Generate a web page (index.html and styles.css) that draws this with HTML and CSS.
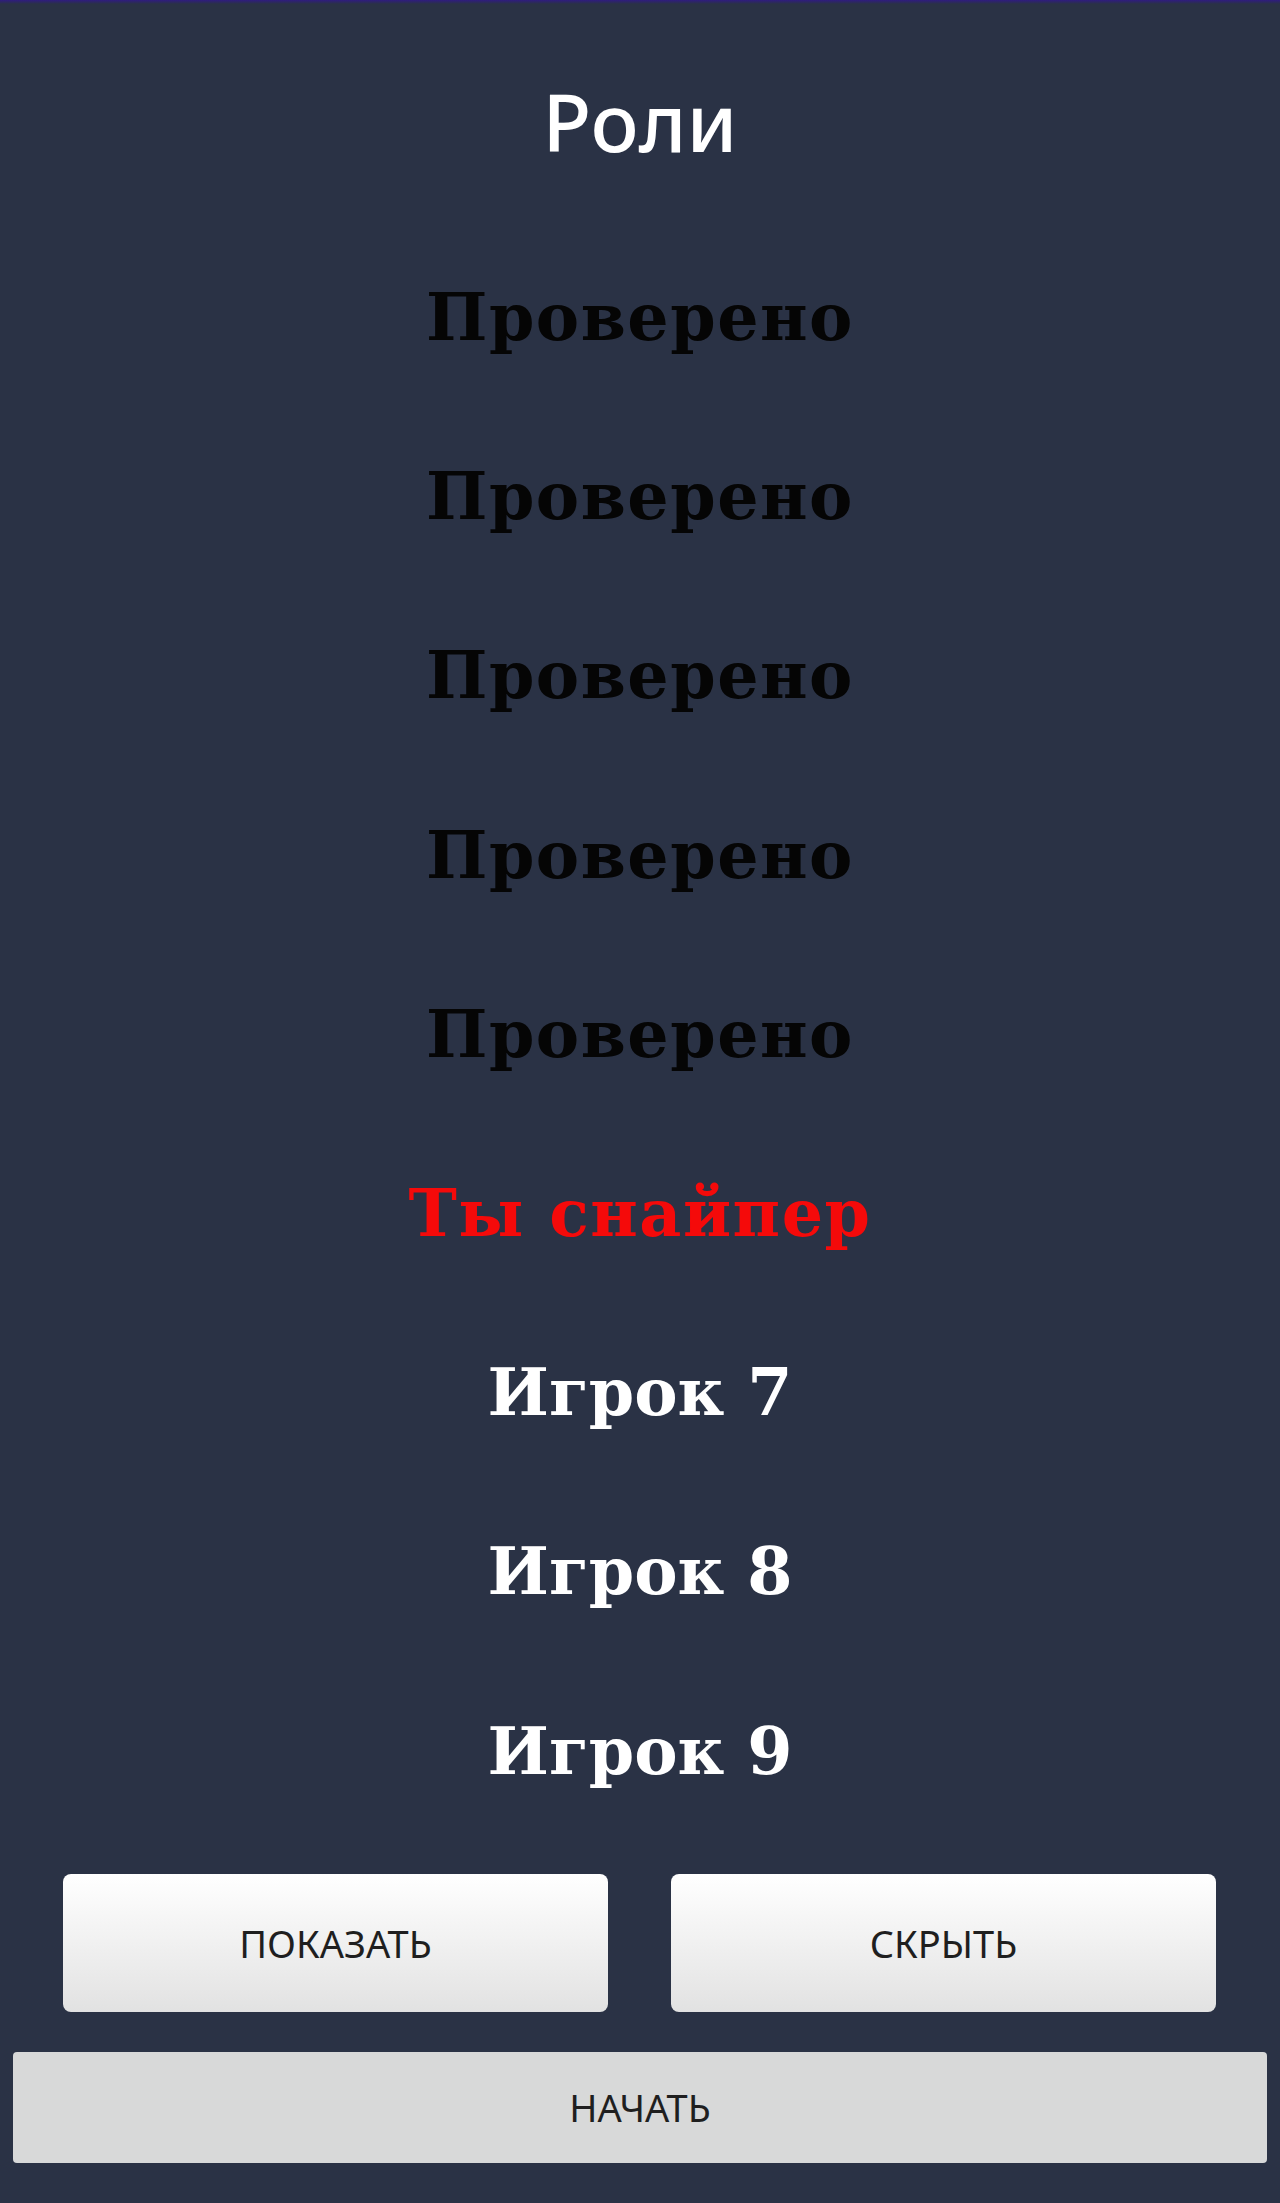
FILE: index.html
```html
<!DOCTYPE html>
<html lang="ru">
<head>
    <meta charset="UTF-8">
    <meta name="viewport" content="width=device-width, initial-scale=1.0">
    <title>Роли</title>
    <link rel="stylesheet" href="styles.css">
</head>
<body>
    <div class="status-line"></div>

    <h1 class="title">Роли</h1>

    <ul class="roles">
        <li class="role role-checked">Проверено</li>
        <li class="role role-checked">Проверено</li>
        <li class="role role-checked">Проверено</li>
        <li class="role role-checked">Проверено</li>
        <li class="role role-checked">Проверено</li>
        <li class="role role-mine">Ты снайпер</li>
        <li class="role role-player">Игрок 7</li>
        <li class="role role-player">Игрок 8</li>
        <li class="role role-player">Игрок 9</li>
    </ul>

    <div class="actions">
        <button class="btn btn-light">ПОКАЗАТЬ</button>
        <button class="btn btn-light">СКРЫТЬ</button>
    </div>

    <button class="btn btn-start">НАЧАТЬ</button>
</body>
</html>
```

FILE: styles.css
```css
:root {
    --color-background: #2a3245;
    --color-accent: #2f1c80;
    --color-text: #ffffff;
    --color-checked: #050505;
    --color-mine: #f50a0a;
    --color-button-text: #1f1f1f;
}

body {
    margin: 0;
    background: var(--color-background);
    color: var(--color-text);
    font-family: "Noto Sans", "Open Sans", sans-serif;
}

.status-line {
    height: 4px;
    background: linear-gradient(to bottom, var(--color-accent), var(--color-background));
}

.title {
    margin: 0;
    padding-top: 62px;
    font-size: 80px;
    font-weight: 500;
    line-height: 110px;
    text-align: center;
}

.roles {
    list-style: none;
    margin: 52px 0 0;
    padding: 0;
}

.role {
    height: 179.2px;
    line-height: 179.2px;
    font-family: "DejaVu Serif", "Liberation Serif", serif;
    font-size: 65px;
    font-weight: bold;
    letter-spacing: 1.5px;
    text-align: center;
}

.role-checked {
    color: var(--color-checked);
}

.role-mine {
    color: var(--color-mine);
}

.role-player {
    letter-spacing: 0;
}

.actions {
    display: flex;
    gap: 63px;
    margin: 33px 64px 0 63px;
}

.btn {
    border: none;
    font-family: "Noto Sans", "Open Sans", sans-serif;
    font-size: 38px;
    color: var(--color-button-text);
    cursor: pointer;
}

.btn-light {
    flex: 1;
    height: 138px;
    border-radius: 8px;
    background: linear-gradient(to bottom, #ffffff, #e2e2e2);
}

.btn-start {
    display: block;
    width: 1254px;
    height: 111px;
    margin: 40px 0 0 13px;
    border-radius: 4px;
    background: #d8d9d9;
}
```
